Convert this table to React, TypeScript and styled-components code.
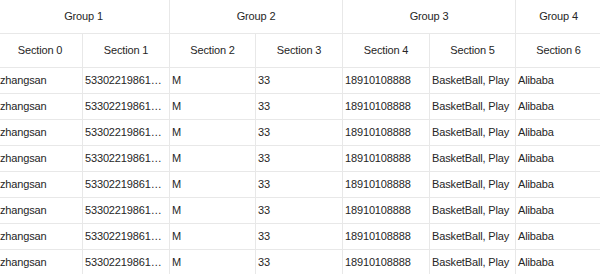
import React from 'react';
import styled, { createGlobalStyle } from 'styled-components';

const GlobalStyle = createGlobalStyle`
  html, body {
    margin: 0;
    padding: 0;
    background: #fff;
    overflow: hidden;
  }
`;

const groups = [
  { title: 'Group 1', span: 2 },
  { title: 'Group 2', span: 2 },
  { title: 'Group 3', span: 2 },
  { title: 'Group 4', span: 1 },
];

const columnWidths = [85, 87, 86, 87, 87, 86, 86];

const row = ['zhangsan', '533022198610101234', 'M', '33', '18910108888', 'BasketBall, Play', 'Alibaba'];
const rows = Array.from({ length: 8 }, () => row);

const App: React.FC = () => {
  return (
    <>
      <GlobalStyle />
      <Viewport>
        <Table>
          <colgroup>
            {columnWidths.map((w, i) => (
              <col key={i} style={{ width: w }} />
            ))}
          </colgroup>
          <thead>
            <tr>
              {groups.map(g => (
                <HeadCell key={g.title} colSpan={g.span}>
                  {g.title}
                </HeadCell>
              ))}
            </tr>
            <tr>
              {columnWidths.map((_, i) => (
                <HeadCell key={i}>Section {i}</HeadCell>
              ))}
            </tr>
          </thead>
          <tbody>
            {rows.map((r, ri) => (
              <tr key={ri}>
                {r.map((value, ci) => (
                  <Cell key={ci}>{value}</Cell>
                ))}
              </tr>
            ))}
          </tbody>
        </Table>
      </Viewport>
    </>
  );
};

const Viewport = styled.div`
  width: 600px;
  height: 274px;
  overflow: hidden;
  font-family: 'Liberation Sans', Arial, sans-serif;
  font-size: 11px;
  letter-spacing: -0.15px;
  color: #262626;
`;

const Table = styled.table`
  table-layout: fixed;
  width: 604px;
  margin-left: -2px;
  border-collapse: separate;
  border-spacing: 0;
`;

const HeadCell = styled.th`
  font-weight: 400;
  text-align: center;
  height: 33px;
  line-height: 33px;
  padding: 0 2px;
  border-right: 1px solid #e8e8e8;
  border-bottom: 1px solid #e8e8e8;
  white-space: nowrap;
  overflow: hidden;
`;

const Cell = styled.td`
  height: 25px;
  line-height: 25px;
  padding: 0 2px;
  border-right: 1px solid #e8e8e8;
  border-bottom: 1px solid #e8e8e8;
  white-space: nowrap;
  overflow: hidden;
  text-overflow: ellipsis;
`;

export default App;
